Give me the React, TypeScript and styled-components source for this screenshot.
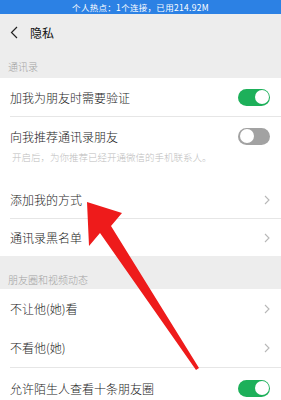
import React from 'react';
import styled, { createGlobalStyle } from 'styled-components';

const Global = createGlobalStyle`
  body {
    margin: 0;
    background: #ededed;
    font-family: "Noto Sans CJK SC", "Noto Sans", sans-serif;
  }
`;

const Page = styled.div`
  position: relative;
  width: 281px;
  height: 400px;
  overflow: hidden;
  background: #ededed;
`;

const StatusBar = styled.div`
  height: 14px;
  background: #2c81e4;
  color: #fff;
  font-size: 8.5px;
  line-height: 14px;
  text-align: center;
  letter-spacing: 0.3px;
`;

const Header = styled.div`
  height: 36px;
  display: flex;
  align-items: center;
  padding-left: 10px;
  gap: 12px;
  color: #111;
  font-size: 12px;
`;

const SectionLabel = styled.div<{ $top: number; $bottom: number }>`
  padding: ${p => p.$top}px 8px ${p => p.$bottom}px;
  font-size: 10px;
  line-height: 12px;
  color: #a3a3a3;
  font-weight: 300;
`;

const Group = styled.div`
  background: #fff;
`;

const Row = styled.div`
  padding-left: 10px;
`;

const RowInner = styled.div<{ $h: number; $divider?: boolean }>`
  box-sizing: border-box;
  height: ${p => p.$h}px;
  display: flex;
  align-items: center;
  justify-content: space-between;
  padding-right: 11px;
  border-bottom: ${p => (p.$divider ? '1px solid #e6e6e6' : 'none')};
  font-size: 12px;
  font-weight: 300;
  color: #1c1c1c;
`;

const Note = styled.div`
  margin-top: -4px;
  padding: 0 0 18px 2px;
  font-size: 9.5px;
  line-height: 12px;
  font-weight: 300;
  color: #bdbdbd;
`;

const Track = styled.div<{ $on: boolean }>`
  box-sizing: border-box;
  width: 32px;
  height: 17px;
  border-radius: 9px;
  padding: 1.5px;
  display: flex;
  justify-content: ${p => (p.$on ? 'flex-end' : 'flex-start')};
  background: ${p => (p.$on ? '#1db05a' : '#a2a2a2')};
`;

const Knob = styled.div`
  width: 14px;
  height: 14px;
  border-radius: 50%;
  background: #fff;
`;

const Arrow = styled.svg`
  position: absolute;
  left: 0;
  top: 0;
  pointer-events: none;
`;

const Toggle = ({ on }: { on: boolean }) => (
  <Track $on={on}>
    <Knob />
  </Track>
);

const Chevron = () => (
  <svg width="6" height="10" viewBox="0 0 6 10">
    <path d="M1 1l4 4-4 4" fill="none" stroke="#b8b8b8" strokeWidth="1.1" />
  </svg>
);

export default function App() {
  return (
    <Page>
      <Global />
      <StatusBar>个人热点：1个连接，已用214.92M</StatusBar>
      <Header>
        <svg width="8" height="13" viewBox="0 0 8 13">
          <path d="M7 1L1.5 6.5 7 12" fill="none" stroke="#222" strokeWidth="1.2" />
        </svg>
        <span>隐私</span>
      </Header>

      <SectionLabel $top={11} $bottom={5}>通讯录</SectionLabel>
      <Group>
        <Row>
          <RowInner $h={39} $divider>
            加我为朋友时需要验证
            <Toggle on />
          </RowInner>
        </Row>
        <Row>
          <RowInner $h={38}>
            向我推荐通讯录朋友
            <Toggle on={false} />
          </RowInner>
          <Note>开启后，为你推荐已经开通微信的手机联系人。</Note>
        </Row>
        <Row>
          <RowInner $h={38} $divider>
            添加我的方式
            <Chevron />
          </RowInner>
        </Row>
        <Row>
          <RowInner $h={37}>
            通讯录黑名单
            <Chevron />
          </RowInner>
        </Row>
      </Group>

      <SectionLabel $top={18} $bottom={3}>朋友圈和视频动态</SectionLabel>
      <Group>
        <Row>
          <RowInner $h={39}>
            不让他(她)看
            <Chevron />
          </RowInner>
        </Row>
        <Row>
          <RowInner $h={40} $divider>
            不看他(她)
            <Chevron />
          </RowInner>
        </Row>
        <Row>
          <RowInner $h={40}>
            允许陌生人查看十条朋友圈
            <Toggle on />
          </RowInner>
        </Row>
      </Group>

      <Arrow width="281" height="400" viewBox="0 0 281 400">
        <polygon
          points="87,202 122,213 111,226 199,368 196,370 100,233 89,246"
          fill="#ee1b1b"
        />
      </Arrow>
    </Page>
  );
}
